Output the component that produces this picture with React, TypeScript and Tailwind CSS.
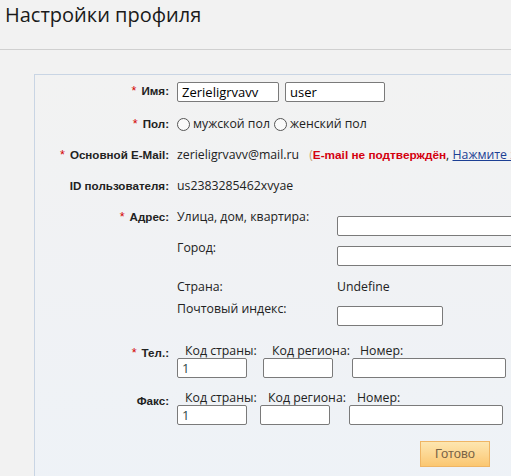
import React from "react";

const Req = () => <span className="text-[#d40000] font-normal text-[12.5px] mr-[5px]">*</span>;

const Label = ({ children, req }: { children: React.ReactNode; req?: boolean }) => (
  <div className="w-[134px] shrink-0 text-right font-bold text-[11.6px] text-[#222] whitespace-nowrap" style={{ fontFamily: '"Liberation Sans", sans-serif' }}>
    {req && <Req />}
    {children}
  </div>
);

const Input = ({ w, value, color }: { w: string; value?: string; color?: string }) => (
  <div className={`${w} h-[20px] bg-white border border-[#7a7a7a] rounded-[2px] px-[4px] text-[13px] leading-[18px] ${color ?? "text-black"}`}>{value}</div>
);

const Radio = () => <span className="inline-block w-[13px] h-[13px] rounded-full border border-[#555] bg-[#fafafa] mr-[3px] align-middle" />;

export default function App() {
  return (
    <div className="w-full min-h-[476px] bg-[#f2f2f2] overflow-hidden text-[#222]" style={{ fontFamily: '"Open Sans", sans-serif' }}>
      <div className="h-[50px] border-b border-[#d0d0d0] pl-[5px] pt-[1px]">
        <h1 className="text-[20px] leading-[28px] text-[#1a1a1a] font-normal">Настройки профиля</h1>
      </div>
      <div className="ml-[34px] mt-[24px] w-[600px] h-[420px] border-l border-t border-[#c9d5e4] bg-gradient-to-b from-[#f2f2f2] to-[#eef2f7] text-[12.3px]">
        {/* Имя */}
        <div className="flex items-center h-[33px]">
          <Label req>Имя:</Label>
          <div className="ml-[8px] flex gap-[6px]">
            <Input w="w-[102px]" value="Zerieligrvavv" />
            <Input w="w-[100px]" value="user" />
          </div>
        </div>
        {/* Пол */}
        <div className="flex items-center h-[32px]">
          <Label req>Пол:</Label>
          <div className="ml-[8px] flex items-center whitespace-nowrap">
            <Radio />
            <span className="mr-[4px]">мужской пол</span>
            <Radio />
            <span>женский пол</span>
          </div>
        </div>
        {/* Email */}
        <div className="flex items-center h-[31px]">
          <Label req>Основной E-Mail:</Label>
          <div className="ml-[8px] whitespace-nowrap">
            <span>zerieligrvavv@mail.ru</span>
            <span className="ml-[10px] text-[#c9a07a]">(</span>
            <span className="text-[#d4000f] font-bold text-[11.8px]" style={{ fontFamily: '"Liberation Sans", sans-serif' }}>E-mail не подтверждён</span>
            <span>, </span>
            <span className="text-[#1c3f94] underline">Нажмите здесь</span>
          </div>
        </div>
        {/* ID */}
        <div className="flex items-center h-[30px]">
          <Label>ID пользователя:</Label>
          <div className="ml-[8px] whitespace-nowrap">us2383285462xvyae</div>
        </div>
        {/* Адрес */}
        <div className="flex items-start mt-[8px]">
          <div className="leading-[16px]"><Label req>Адрес:</Label></div>
          <div className="ml-[8px] flex flex-col whitespace-nowrap">
            <div className="flex items-start">
              <div className="w-[160px] leading-[16px]">Улица, дом, квартира:</div>
              <div className="mt-[7px]"><Input w="w-[200px]" /></div>
            </div>
            <div className="flex items-start mt-[4px]">
              <div className="w-[160px] leading-[16px]">Город:</div>
              <div className="mt-[6px]"><Input w="w-[200px]" /></div>
            </div>
            <div className="flex items-start mt-[13px]">
              <div className="w-[160px] leading-[16px]">Страна:</div>
              <div className="leading-[16px]">Undefine</div>
            </div>
            <div className="flex items-start mt-[6px]">
              <div className="w-[160px] leading-[16px]">Почтовый индекс:</div>
              <div className="mt-[5px]"><Input w="w-[106px]" /></div>
            </div>
          </div>
        </div>
        {/* Тел */}
        <div className="flex items-start mt-[18px]">
          <div className="leading-[18px]"><Label req>Тел.:</Label></div>
          <div className="ml-[8px] flex whitespace-nowrap">
            <div className="w-[86px]">
              <div className="pl-[8px] leading-[14px]">Код страны:</div>
              <Input w="w-[70px]" value="1" color="text-[#2f4a47]" />
            </div>
            <div className="w-[89px]">
              <div className="pl-[9px] leading-[14px]">Код региона:</div>
              <Input w="w-[70px]" />
            </div>
            <div>
              <div className="pl-[8px] leading-[14px]">Номер:</div>
              <Input w="w-[154px]" />
            </div>
          </div>
        </div>
        {/* Факс */}
        <div className="flex items-start mt-[13px]">
          <div className="leading-[20px]"><Label>Факс:</Label></div>
          <div className="ml-[8px] flex whitespace-nowrap">
            <div className="w-[83px]">
              <div className="pl-[8px] leading-[14px]">Код страны:</div>
              <Input w="w-[70px]" value="1" color="text-[#2f4a47]" />
            </div>
            <div className="w-[89px]">
              <div className="pl-[8px] leading-[14px]">Код региона:</div>
              <Input w="w-[70px]" />
            </div>
            <div>
              <div className="pl-[8px] leading-[14px]">Номер:</div>
              <Input w="w-[154px]" />
            </div>
          </div>
        </div>
        {/* Button */}
        <div className="ml-[385px] mt-[16px]">
          <button className="w-[70px] h-[26px] border border-[#efb564] bg-gradient-to-b from-[#fde6b0] to-[#fbc771] text-[#7a6446] text-[13px]" style={{ fontFamily: '"Liberation Sans", sans-serif' }}>Готово</button>
        </div>
      </div>
    </div>
  );
}
